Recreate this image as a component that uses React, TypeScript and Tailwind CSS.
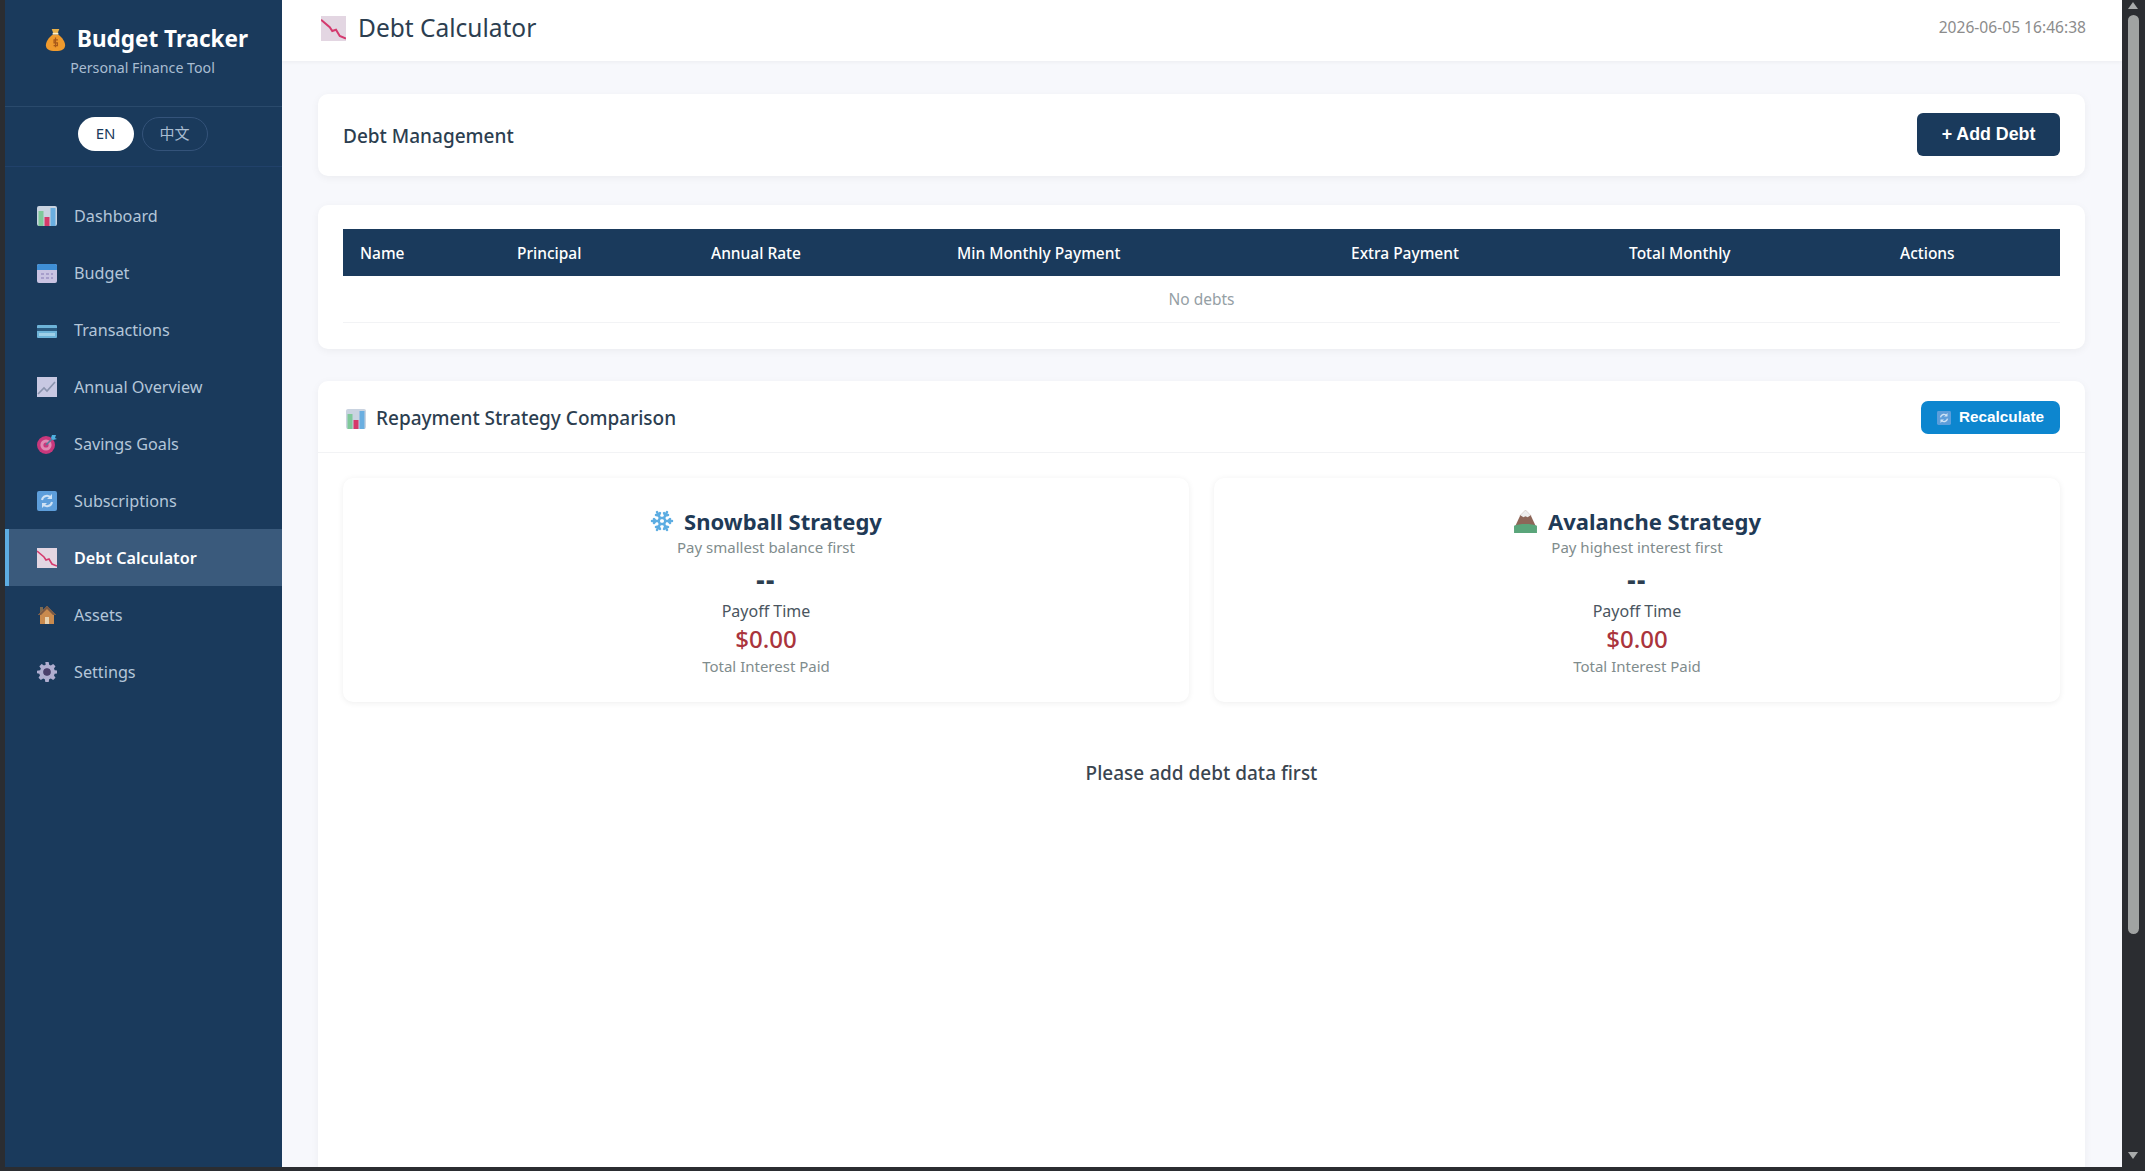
import { Snowflake } from "lucide-react";
import type { ReactNode } from "react";

const font = "font-['Noto_Sans','Liberation_Sans',sans-serif]";

const ChartIcon = ({ className }: { className: string }) => (
  <svg viewBox="0 0 20 20" className={className}>
    <rect width="20" height="20" rx="2" fill="#c9d3e0" />
    <rect x="1.5" y="5" width="5" height="15" fill="#7fc99a" />
    <rect x="7.5" y="11" width="5" height="9" fill="#d63a6a" />
    <rect x="13.5" y="2" width="5" height="18" fill="#6aaee0" />
  </svg>
);

const CalendarIcon = () => (
  <svg viewBox="0 0 20 20" className="w-5 h-5">
    <rect y="1" width="20" height="19" rx="2" fill="#c9c3e2" />
    <path d="M0 3a2 2 0 0 1 2-2h16a2 2 0 0 1 2 2v4H0z" fill="#3f8fd6" />
    <path d="M4 10h3v2H4zM9 10h3v2H9zM14 10h2v2h-2zM4 14h3v2H4zM9 14h3v2H9zM14 14h2v2h-2z" fill="#a79ecb" />
  </svg>
);

const CardIcon = () => (
  <svg viewBox="0 0 20 20" className="w-5 h-5">
    <rect y="5" width="20" height="13" rx="1" fill="#6db3d8" />
    <rect y="8" width="20" height="3" fill="#2a5a80" />
    <rect x="2" y="13" width="16" height="3" fill="#9fd0e8" />
  </svg>
);

const LineIcon = () => (
  <svg viewBox="0 0 20 20" className="w-5 h-5">
    <rect width="20" height="20" fill="#c8c8e2" />
    <path d="M1 17l6-6 3 3 8-9" fill="none" stroke="#8a93ad" strokeWidth="1.6" />
  </svg>
);

const TargetIcon = () => (
  <svg viewBox="0 0 20 20" className="w-5 h-5">
    <circle cx="9" cy="11" r="9" fill="#c9387c" />
    <circle cx="9" cy="11" r="5.600" fill="#e08ab4" />
    <circle cx="9" cy="11" r="2.600" fill="#c9387c" />
    <path d="M9 11l8-8" stroke="#4f7f9f" strokeWidth="1.6" />
    <path d="M15 1l4 0-1 3 2 1-4 1-2-2z" fill="#4fb0e0" />
  </svg>
);

const RefreshIcon = ({ className }: { className: string }) => (
  <svg viewBox="0 0 20 20" className={className}>
    <rect width="20" height="20" rx="2" fill="#5d9edb" />
    <path d="M5 9a5 5 0 0 1 9-2M15 11a5 5 0 0 1-9 2" fill="none" stroke="#cfe2f4" strokeWidth="2" />
    <path d="M15 3v5h-5zM5 17v-5h5z" fill="#cfe2f4" />
  </svg>
);

const DownIcon = ({ className }: { className: string }) => (
  <svg viewBox="0 0 20 20" className={className}>
    <rect width="20" height="20" fill="#e3d6e2" />
    <path d="M0 3l7 6 2 3 3-1 3 5 5 2" fill="none" stroke="#d43a6e" strokeWidth="1.6" />
  </svg>
);

const HouseIcon = () => (
  <svg viewBox="0 0 20 20" className="w-5 h-5">
    <rect x="3" y="2" width="3" height="6" fill="#7a6a55" />
    <path d="M10 1L1 10h2v9h14v-9h2z" fill="#c98a4e" />
    <path d="M10 1L1 10h3l6-6 6 6h3z" fill="#7d5a44" />
    <rect x="8" y="12" width="4" height="7" fill="#e8d2b0" />
  </svg>
);

const GearIcon = () => (
  <svg viewBox="0 0 24 24" className="w-5 h-5">
    <path
      fill="#b0aed0"
      fillRule="evenodd"
      d="M10 0h4l.6 3.3 2 .8L19.400 2.300l2.800 2.800-1.800 2.700.8 2 3.800.6v3.200l-3.800.6-.8 2 1.800 2.700-2.800 2.800-2.800-1.800-2 .8-.6 3.300h-4l-.6-3.300-2-.8-2.800 1.800-2.800-2.800 1.800-2.700-.8-2L0 13.600v-3.200l3.800-.6.8-2-1.800-2.700 2.800-2.800 2.800 1.800 2-.8zM12 8a4 4 0 1 0 0 8 4 4 0 0 0 0-8z"
    />
    <circle cx="12" cy="12" r="4.500" fill="#4b3f6b" />
  </svg>
);

const BagIcon = () => (
  <svg viewBox="0 0 20 24" className="w-[21px] h-[23px]">
    <path d="M6 1h8l-2 5H8z" fill="#e8b04a" />
    <rect x="7" y="5" width="6" height="2" fill="#fff0c8" />
    <path d="M7 7h6c4 3 7 7 7 11 0 4-3 6-10 6S0 22 0 18c0-4 3-8 7-11z" fill="#ef9a2d" />
    <path d="M10 10v10M12.500 12.500h-4v3h3.500v3h-4" fill="none" stroke="#a8591a" strokeWidth="1.300" />
  </svg>
);

const MountainIcon = () => (
  <svg viewBox="0 0 24 22" className="w-[25px] h-[23px]">
    <path d="M12 0L7 5 1 18h22L17 5z" fill="#8d6658" />
    <path d="M12 0L7 5l3 2 2-1 2 1 3-2z" fill="#eeeeee" />
    <path d="M1 15c5-2 17-2 22 0v7H1z" fill="#5aa57a" />
  </svg>
);

const navItems: { label: string; icon: ReactNode; active?: boolean }[] = [
  { label: "Dashboard", icon: <ChartIcon className="w-5 h-5" /> },
  { label: "Budget", icon: <CalendarIcon /> },
  { label: "Transactions", icon: <CardIcon /> },
  { label: "Annual Overview", icon: <LineIcon /> },
  { label: "Savings Goals", icon: <TargetIcon /> },
  { label: "Subscriptions", icon: <RefreshIcon className="w-5 h-5" /> },
  { label: "Debt Calculator", icon: <DownIcon className="w-5 h-5" />, active: true },
  { label: "Assets", icon: <HouseIcon /> },
  { label: "Settings", icon: <GearIcon /> },
];

const columns = [
  { label: "Name", width: "w-[157px]" },
  { label: "Principal", width: "w-[194px]" },
  { label: "Annual Rate", width: "w-[246px]" },
  { label: "Min Monthly Payment", width: "w-[394px]" },
  { label: "Extra Payment", width: "w-[278px]" },
  { label: "Total Monthly", width: "w-[271px]" },
  { label: "Actions", width: "w-[177px]" },
];

const Sidebar = () => (
  <aside className="w-[277px] shrink-0 bg-[#1a3a5c] flex flex-col">
    <div className="h-[107px] border-b border-[#2a4a6c] flex flex-col items-center pt-[24px]">
      <div className="flex items-center gap-[11px] h-[30px] ml-[6px]">
        <BagIcon />
        <span className="text-[22.500px] leading-[30px] font-bold text-white">Budget Tracker</span>
      </div>
      <div className="text-[14.200px] leading-[20px] mt-[4px] mr-[2px] text-[#a9bdd2]">Personal Finance Tool</div>
    </div>
    <div className="h-[60px] border-b border-[#21416a] flex items-center justify-center gap-[8px] pr-[2px] pb-[6px]">
      <button className="w-[56px] h-[34px] rounded-full bg-white text-[#1a3a5c] text-[15px]">EN</button>
      <button className="w-[66px] h-[34px] rounded-full border border-[#34537a] text-[#a9bdd2] text-[15px] font-['Noto_Sans_CJK_SC',sans-serif]">
        中文
      </button>
    </div>
    <nav className="pt-[20px] flex flex-col">
      {navItems.map((item) => (
        <div
          key={item.label}
          className={
            item.active
              ? "h-[57px] flex items-center gap-[17px] pl-[28px] border-l-[4px] border-[#5dade2] bg-[#3a5a7c] text-white font-semibold text-[16.200px]"
              : "h-[57px] flex items-center gap-[17px] pl-[32px] text-[#b4c6d9] text-[16.200px]"
          }
        >
          {item.icon}
          <span className="pt-[2px]">{item.label}</span>
        </div>
      ))}
    </nav>
  </aside>
);

const Strategy = ({ icon, title, subtitle }: { icon: ReactNode; title: string; subtitle: string }) => (
  <div className="h-[224px] rounded-[10px] bg-white shadow-[0_1px_6px_rgba(0,0,0,0.07)] flex flex-col items-center pt-[28px] text-center">
    <div className="flex items-center gap-[10px] h-[30px]">
      {icon}
      <span className="text-[22px] leading-[30px] font-bold text-[#1f3a56]">{title}</span>
    </div>
    <div className="text-[15px] leading-[22px] text-[#7f8c8d]">{subtitle}</div>
    <div className="text-[26px] leading-[34px] mt-[4px] font-extrabold tracking-[1.500px] text-[#2c3e50]">--</div>
    <div className="text-[16px] leading-[24px] mt-[3px] text-[#4a5560]">Payoff Time</div>
    <div className="text-[24px] leading-[32px] text-[#aa343c] font-medium">$0.00</div>
    <div className="text-[15px] leading-[22px] text-[#7f8c8d]">Total Interest Paid</div>
  </div>
);

export default function App() {
  return (
    <div className={`${font} h-screen overflow-hidden bg-[#2b2d31] flex pl-[5px] pb-[4px]`}>
      <Sidebar />
      <main className="flex-1 min-w-0 bg-[#f7f8fc] flex flex-col overflow-hidden">
        <header className="h-[61px] shrink-0 bg-white shadow-[0_1px_4px_rgba(0,0,0,0.05)] flex items-center justify-between pl-[39px] pr-[36px] pb-[5px]">
          <div className="flex items-center gap-[12px]">
            <DownIcon className="w-[25px] h-[25px]" />
            <h1 className="text-[24.500px] font-normal text-[#2c3e50]">Debt Calculator</h1>
          </div>
          <span className="text-[15.600px] text-[#8c8c8c]">2026-06-05 16:46:38</span>
        </header>
        <div className="flex-1 min-h-0 flex flex-col pt-[33px] pl-[36px] pr-[37px]">
          <section className="h-[82px] shrink-0 rounded-[10px] bg-white shadow-[0_2px_8px_rgba(0,0,0,0.05)] flex items-center justify-between px-[25px]">
            <h2 className="text-[19px] pt-[3px] font-medium text-[#2c3e50]">Debt Management</h2>
            <button className="w-[143px] h-[43px] mb-[2px] rounded-[6px] bg-[#1a3a5c] text-white font-bold text-[17.800px] font-['Liberation_Sans',sans-serif]">
              + Add Debt
            </button>
          </section>
          <section className="h-[144px] shrink-0 mt-[29px] rounded-[10px] bg-white shadow-[0_2px_8px_rgba(0,0,0,0.05)] px-[25px] pt-[24px]">
            <table className="w-full table-fixed border-collapse">
              <thead>
                <tr className="bg-[#1a3a5c] h-[47px] text-white">
                  {columns.map((col) => (
                    <th key={col.label} className={`${col.width} pl-[17px] pt-[2px] text-left text-[15.500px] font-medium`}>
                      {col.label}
                    </th>
                  ))}
                </tr>
              </thead>
              <tbody>
                <tr className="h-[46px] border-b border-[#f2f3f5]">
                  <td colSpan={7} className="pt-[2px] text-center text-[15.500px] text-[#95a0a5]">
                    No debts
                  </td>
                </tr>
              </tbody>
            </table>
          </section>
          <section className="flex-1 mt-[32px] rounded-t-[10px] bg-white shadow-[0_2px_8px_rgba(0,0,0,0.05)]">
            <div className="h-[72px] border-b border-[#f2f3f5] flex items-center justify-between pl-[28px] pr-[25px]">
              <div className="flex items-center gap-[10px] pt-[4px]">
                <ChartIcon className="w-5 h-5" />
                <h2 className="text-[19px] font-medium text-[#2c3e50]">Repayment Strategy Comparison</h2>
              </div>
              <button className="w-[139px] h-[33px] mt-[1px] pt-[1px] rounded-[7px] bg-[#0d86cf] text-white font-bold text-[15.300px] font-['Liberation_Sans',sans-serif] flex items-center justify-center gap-[8px]">
                <RefreshIcon className="w-[14px] h-[14px]" />
                Recalculate
              </button>
            </div>
            <div className="grid grid-cols-2 gap-[25px] px-[25px] pt-[25px]">
              <Strategy
                icon={<Snowflake className="w-6 h-6 text-[#5dade2]" strokeWidth={2.500} />}
                title="Snowball Strategy"
                subtitle="Pay smallest balance first"
              />
              <Strategy icon={<MountainIcon />} title="Avalanche Strategy" subtitle="Pay highest interest first" />
            </div>
            <p className="mt-[57px] text-center text-[19px] font-medium text-[#3a4550]">Please add debt data first</p>
          </section>
        </div>
      </main>
      <div className="w-[23px] shrink-0 -mb-[4px] flex flex-col items-center pt-[2px] pr-[1px] text-[#a9abab]">
        <div className="w-0 h-0 border-x-[5px] border-x-transparent border-b-[7px] border-b-[#a9abab]" />
        <div className="w-[11px] h-[919px] mt-[6px] rounded-full bg-[#a0a3a2]" />
        <div className="mt-auto mb-[12px] w-0 h-0 border-x-[5px] border-x-transparent border-t-[7px] border-t-[#a9abab]" />
      </div>
    </div>
  );
}
